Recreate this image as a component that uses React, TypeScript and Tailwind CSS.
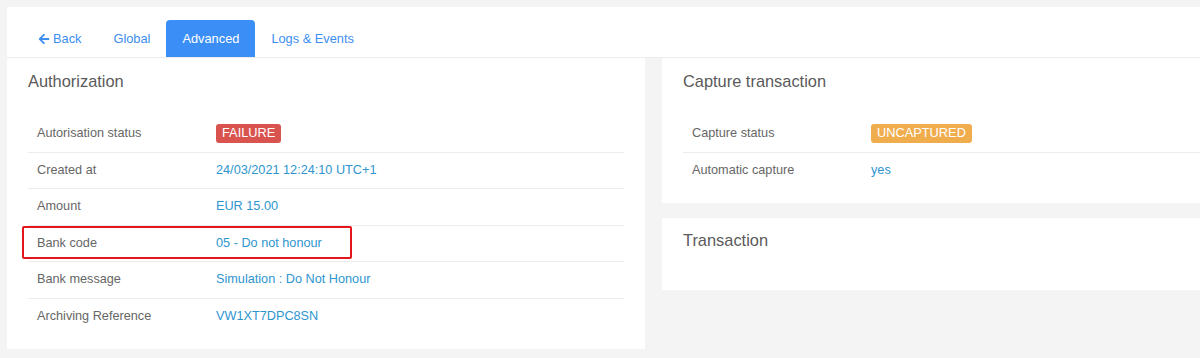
import { FaArrowLeft } from "react-icons/fa";

type Row = {
    label: string;
    value: string;
    badge?: "danger" | "warning";
    highlight?: boolean;
};

const authRows: Row[] = [
    { label: "Autorisation status", value: "FAILURE", badge: "danger" },
    { label: "Created at", value: "24/03/2021 12:24:10 UTC+1" },
    { label: "Amount", value: "EUR 15.00" },
    { label: "Bank code", value: "05 - Do not honour", highlight: true },
    { label: "Bank message", value: "Simulation : Do Not Honour" },
    { label: "Archiving Reference", value: "VW1XT7DPC8SN" },
];

const captureRows: Row[] = [
    { label: "Capture status", value: "UNCAPTURED", badge: "warning" },
    { label: "Automatic capture", value: "yes" },
];

function Badge({ kind, text }: { kind: "danger" | "warning"; text: string }) {
    const bg = kind === "danger" ? "bg-[#d9534f]" : "bg-[#f0ad4e]";
    return (
        <span className={`inline-flex h-[19px] items-center rounded-[3px] px-[6px] text-[12.8px] leading-none text-white ${bg}`}>
            {text}
        </span>
    );
}

function InfoTable({ rows }: { rows: Row[] }) {
    return (
        <div className="flex flex-col">
            {rows.map((row, i) => (
                <div
                    key={row.label}
                    className={`relative flex h-[36.5px] items-center text-[12.7px] ${i > 0 ? "border-t border-[#ececec]" : ""}`}
                >
                    <div className="w-[179px] pl-[9px] text-[#666]">{row.label}</div>
                    <div className="pl-[9px] text-[#2e95cf]">
                        {row.badge ? <Badge kind={row.badge} text={row.value} /> : row.value}
                    </div>
                    {row.highlight && (
                        <div className="absolute left-[-6px] top-0 h-[33px] w-[330px] rounded-[2px] border-2 border-[#e3161b]" />
                    )}
                </div>
            ))}
        </div>
    );
}

function Panel({ title, children, className = "" }: { title: string; children?: React.ReactNode; className?: string }) {
    return (
        <div className={`bg-white px-[21px] ${className}`}>
            <h2 className="text-[16.4px] leading-[20px] text-[#5a5a5a]">{title}</h2>
            {children}
        </div>
    );
}

export default function App() {
    const tabs = ["Global", "Advanced", "Logs & Events"];

    return (
        <div
            className="min-h-[358px] w-[1200px] overflow-hidden bg-[#f4f4f4] pl-[7px] pt-[7px]"
            style={{ fontFamily: '"Liberation Sans", Arial, sans-serif' }}
        >
            <div className="flex h-[51px] items-end border-b border-[#ececec] bg-white pl-[15px]">
                <a className="flex h-[37px] items-center gap-[3px] px-[16px] text-[12.8px] text-[#3d8ef0]">
                    <FaArrowLeft className="h-[12px] w-[12px]" />
                    Back
                </a>
                {tabs.map((t) => (
                    <a
                        key={t}
                        className={`flex h-[37px] items-center rounded-t-[4px] px-[16px] text-[12.8px] ${
                            t === "Advanced" ? "bg-[#3a8ef6] text-white" : "text-[#3d8ef0]"
                        }`}
                    >
                        {t}
                    </a>
                ))}
            </div>

            <div className="flex items-start gap-[17px]">
                <Panel title="Authorization" className="w-[638px] shrink-0 pb-[15px] pt-[13px]">
                    <div className="mt-[24px]">
                        <InfoTable rows={authRows} />
                    </div>
                </Panel>

                <div className="flex w-[638px] shrink-0 flex-col gap-[15px]">
                    <Panel title="Capture transaction" className="pb-[15px] pt-[13px]">
                        <div className="mt-[24px]">
                            <InfoTable rows={captureRows} />
                        </div>
                    </Panel>
                    <Panel title="Transaction" className="h-[72px] pt-[12px]" />
                </div>
            </div>
        </div>
    );
}
